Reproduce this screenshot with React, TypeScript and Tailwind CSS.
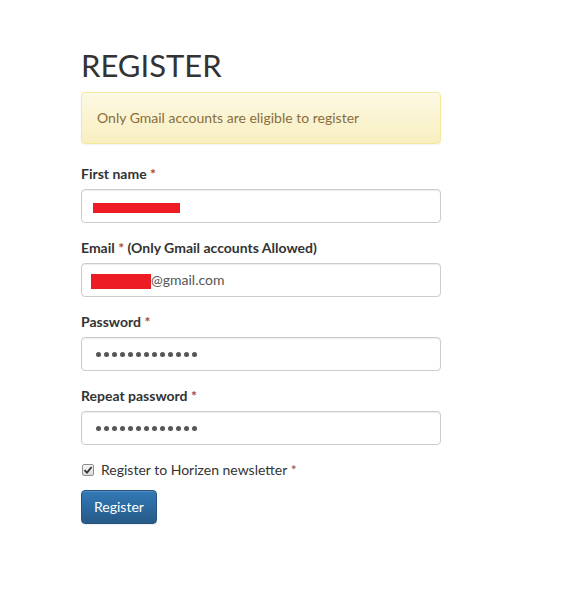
import React from "react";

const Dots = () => (
  <div className="flex items-center gap-[3px]">
    {Array.from({ length: 13 }).map((_, i) => (
      <span key={i} className="block w-[5px] h-[5px] rounded-full bg-[#555]" />
    ))}
  </div>
);

const Field = ({ label, extra, children }: { label: string; extra?: string; children: React.ReactNode }) => (
  <div className="mb-[15px]">
    <div className="text-[14px] leading-[20px] font-bold text-[#333] mb-[5px]">
      {label} <span className="text-[#a94442]">*</span>
      {extra ? <span> {extra}</span> : null}
    </div>
    <div className="h-[34px] w-[360px] border border-[#ccc] rounded-[4px] bg-white shadow-[inset_0_1px_1px_rgba(0,0,0,0.075)] flex items-center text-[14px] text-[#555]">
      {children}
    </div>
  </div>
);

export default function App() {
  return (
    <div className="min-h-[597px] w-[576px] bg-white font-['Lato',sans-serif] text-[#333]">
      <div className="pl-[81px] pt-[48px]">
        <h1 className="text-[31px] leading-[1.1] font-normal text-[#333] mb-[10px]">REGISTER</h1>
        <div className="w-[360px] border border-[#f5e79e] rounded-[4px] bg-gradient-to-b from-[#fcf8e3] to-[#f8efc0] px-[15px] py-[15px] text-[14px] leading-[20px] text-[#8a6d3b] shadow-[inset_0_1px_0_rgba(255,255,255,0.25),0_1px_2px_rgba(0,0,0,0.05)] mb-[20px]">
          Only Gmail accounts are eligible to register
        </div>
        <Field label="First name">
          <div className="pl-[11px] pt-[3px]">
            <span className="block w-[87px] h-[10px] bg-[#ed1c24]" />
          </div>
        </Field>
        <Field label="Email" extra="(Only Gmail accounts Allowed)">
          <div className="pl-[9px] flex items-center">
            <span className="block w-[60px] h-[15px] bg-[#ed1c24] mt-[2px]" />
            <span className="leading-[20px]">@gmail.com</span>
          </div>
        </Field>
        <Field label="Password">
          <div className="pl-[14px]">
            <Dots />
          </div>
        </Field>
        <Field label="Repeat password">
          <div className="pl-[14px]">
            <Dots />
          </div>
        </Field>
        <div className="flex items-center h-[20px] mb-[10px]">
          <span className="ml-[1px] w-[12px] h-[12px] border border-[#8f8f8f] rounded-[2px] bg-gradient-to-b from-[#f4f4f4] to-[#dcdcdc] flex items-center justify-center">
            <svg width="10" height="10" viewBox="0 0 10 10">
              <path d="M1.5 5.2 L4 7.6 L8.6 2" fill="none" stroke="#333" strokeWidth="1.8" />
            </svg>
          </span>
          <span className="ml-[7px] text-[14px] leading-[20px] text-[#333]">
            Register to Horizen newsletter <span className="text-[#a94442]">*</span>
          </span>
        </div>
        <button className="h-[34px] px-[12px] border border-[#245580] rounded-[4px] bg-gradient-to-b from-[#337ab7] to-[#265a88] text-white text-[14px] leading-[20px] shadow-[inset_0_1px_0_rgba(255,255,255,0.15),0_1px_1px_rgba(0,0,0,0.075)]">
          Register
        </button>
      </div>
    </div>
  );
}
